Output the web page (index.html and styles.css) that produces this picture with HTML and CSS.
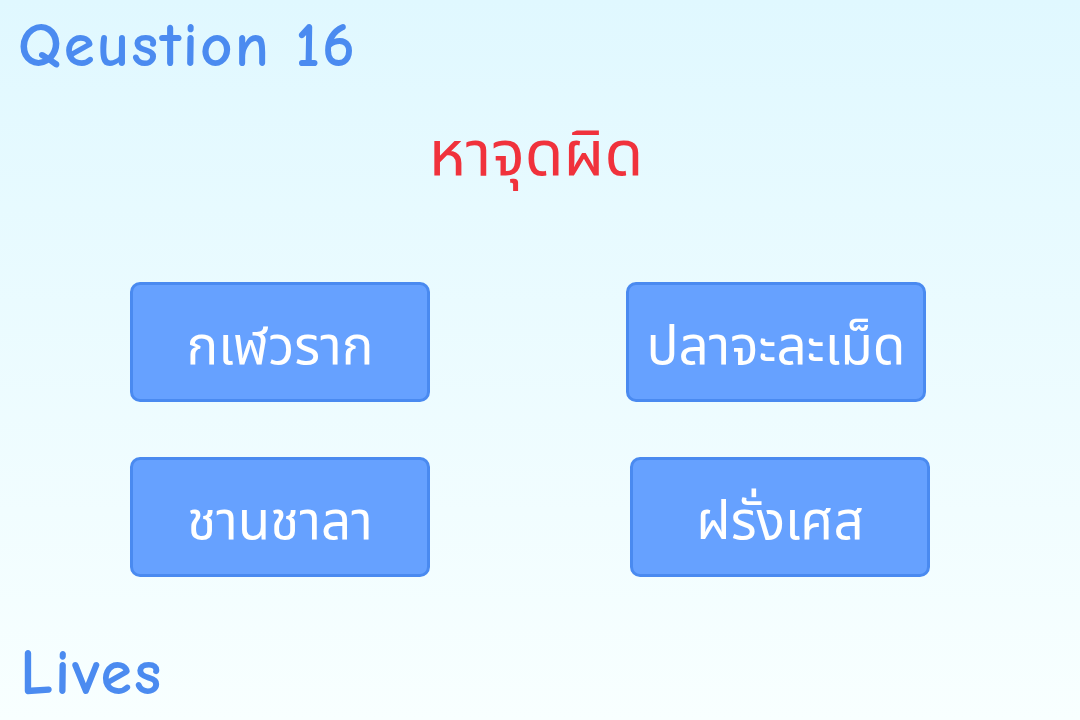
FILE: index.html
```html
<!DOCTYPE html>
<html lang="th">
<head>
    <meta charset="UTF-8">
    <meta name="viewport" content="width=device-width, initial-scale=1.0">
    <title>Quiz</title>
    <link rel="stylesheet" href="styles.css">
</head>
<body>
    <div id="game">
        <h1 class="question-no">Qeustion 16</h1>
        <h2 class="question">หาจุดผิด</h2>

        <div class="answers">
            <button class="answer">กเฬวราก</button>
            <button class="answer">ปลาจะละเม็ด</button>
            <button class="answer">ชานชาลา</button>
            <button class="answer shift">ฝรั่งเศส</button>
        </div>

        <div class="lives">Lives</div>
    </div>
</body>
</html>
```

FILE: styles.css
```css
html, body {
    height: 100%;
}

body {
    margin: 0;
    background: linear-gradient(180deg, #e0f8ff 0%, #f8ffff 100%);
    font-family: "Comic Sans MS", "Comic Neue", "DejaVu Sans", sans-serif;
    overflow: hidden;
}

#game {
    height: 720px;
    display: flex;
    flex-direction: column;
}

.question-no {
    margin: 6px 0 0 18px;
    font-size: 63px;
    font-weight: 600;
    letter-spacing: 2px;
    line-height: 80px;
    color: #4b8bf0;
}

.question {
    margin: 28px 0 0 -8px;
    text-align: center;
    font-family: "Noto Sans Thai", "Noto Sans", sans-serif;
    font-size: 63px;
    font-weight: normal;
    line-height: 84px;
    color: #f0323c;
}

.answers {
    margin: 84px 0 0 130px;
    display: grid;
    grid-template-columns: 300px 300px;
    column-gap: 196px;
    row-gap: 55px;
}

.answer {
    width: 300px;
    height: 120px;
    background: #66a1ff;
    border: 3px solid #4a8af0;
    border-radius: 10px;
    color: #fff;
    font-family: "Noto Sans Thai", "Noto Sans", sans-serif;
    font-size: 53px;
    line-height: 1;
    padding: 12px 0 0 0;
    cursor: pointer;
}

.answer.shift {
    margin-left: 4px;
}

.lives {
    margin-top: auto;
    margin-left: 20px;
    margin-bottom: 10px;
    font-size: 64px;
    font-weight: 600;
    letter-spacing: 2px;
    color: #4b8bf0;
}
```
